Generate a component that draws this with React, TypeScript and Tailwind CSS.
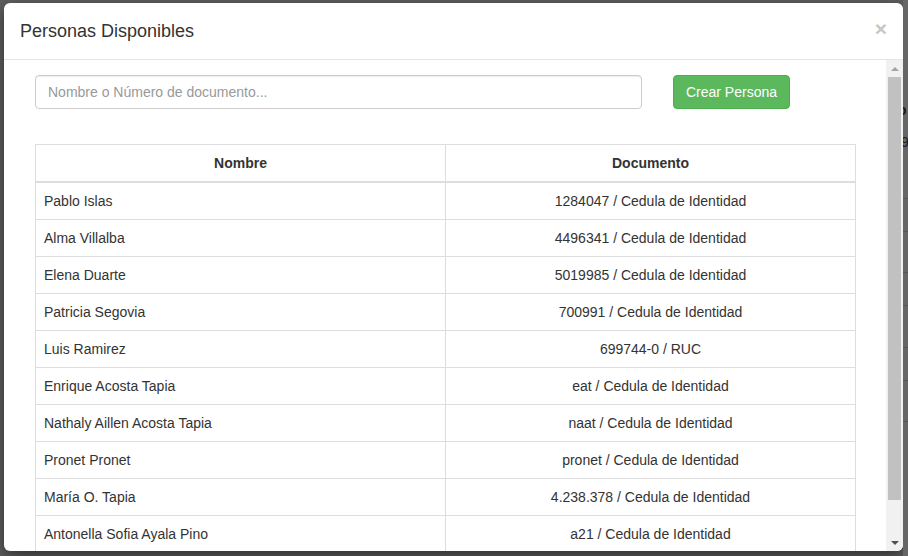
const personas = [
  { nombre: 'Pablo Islas', documento: '1284047 / Cedula de Identidad' },
  { nombre: 'Alma Villalba', documento: '4496341 / Cedula de Identidad' },
  { nombre: 'Elena Duarte', documento: '5019985 / Cedula de Identidad' },
  { nombre: 'Patricia Segovia', documento: '700991 / Cedula de Identidad' },
  { nombre: 'Luis Ramirez', documento: '699744-0 / RUC' },
  { nombre: 'Enrique Acosta Tapia', documento: 'eat / Cedula de Identidad' },
  { nombre: 'Nathaly Aillen Acosta Tapia', documento: 'naat / Cedula de Identidad' },
  { nombre: 'Pronet Pronet', documento: 'pronet / Cedula de Identidad' },
  { nombre: 'María O. Tapia', documento: '4.238.378 / Cedula de Identidad' },
  { nombre: 'Antonella Sofia Ayala Pino', documento: 'a21 / Cedula de Identidad' },
];

const ScrollBar = () => (
  <div className="w-[17px] shrink-0 bg-[#f1f1f1] flex flex-col">
    <div className="h-[17px] flex items-center justify-center">
      <div className="w-0 h-0 border-l-[4px] border-r-[4px] border-b-[4px] border-l-transparent border-r-transparent border-b-[#a3a3a3]" />
    </div>
    <div className="h-[423px] mx-[2px] bg-[#c1c1c1]" />
    <div className="flex-1" />
    <div className="h-[17px] flex items-center justify-center">
      <div className="w-0 h-0 border-l-[4px] border-r-[4px] border-t-[4px] border-l-transparent border-r-transparent border-t-[#505050]" />
    </div>
  </div>
);

const App = () => {
  return (
    <div
      className="w-[908px] h-[556px] overflow-hidden bg-[#5e5e5e] flex text-[#333]"
      style={{ fontFamily: '"Liberation Sans", Arial, Helvetica, sans-serif' }}
    >
      <div className="pl-[4px] pt-[3px] shrink-0">
        <div className="w-[899px] h-[548px] bg-white rounded-[6px] shadow-[0_5px_15px_rgba(0,0,0,0.5)] flex flex-col overflow-hidden">
          {/* Header */}
          <div className="h-[57px] shrink-0 border-b border-[#e5e5e5] flex items-center justify-between pl-[16px] pr-[16px]">
            <h4 className="text-[18px] leading-[26px] font-normal">Personas Disponibles</h4>
            <span className="text-[21px] font-bold leading-none text-[#c6c6c6] -mt-[5px]">×</span>
          </div>

          {/* Body */}
          <div className="flex flex-1 min-h-0">
            <div className="flex-1 overflow-hidden pl-[31px] pt-[15px]">
              <div className="flex items-center gap-[31px]">
                <input
                  className="w-[607px] h-[34px] border border-[#ccc] rounded-[4px] px-[12px] text-[14px] placeholder:text-[#999] outline-none shadow-[inset_0_1px_1px_rgba(0,0,0,0.075)]"
                  placeholder="Nombre o Número de documento..."
                />
                <button className="w-[117px] h-[34px] bg-[#5cb85c] border border-[#4cae4c] rounded-[4px] text-white text-[14px]">
                  Crear Persona
                </button>
              </div>

              <table className="mt-[35px] w-[821px] border-collapse text-[14px] leading-[20px] table-fixed">
                <thead>
                  <tr>
                    <th className="w-1/2 border border-b-2 border-[#ddd] p-[8px] font-bold text-center">Nombre</th>
                    <th className="w-1/2 border border-b-2 border-[#ddd] p-[8px] font-bold text-center">Documento</th>
                  </tr>
                </thead>
                <tbody>
                  {personas.map((p) => (
                    <tr key={p.nombre}>
                      <td className="border border-[#ddd] p-[8px] text-left">{p.nombre}</td>
                      <td className="border border-[#ddd] p-[8px] text-center">{p.documento}</td>
                    </tr>
                  ))}
                </tbody>
              </table>
            </div>
            <ScrollBar />
          </div>
        </div>
      </div>

      {/* page behind the backdrop */}
      <div className="flex-1 flex flex-col bg-[#666] overflow-hidden">
        <div className="h-[100px]" />
        <div className="h-[20px] text-[14px] font-bold text-[#1a1a1a] leading-[20px] -ml-[5px]">o</div>
        <div className="h-[12px]" />
        <div className="h-[20px] text-[14px] text-[#1a1a1a] leading-[20px] -ml-[2px]">9</div>
        <div className="h-[47px] border-b border-[#555]" />
        <div className="h-[33px] border-b border-[#555]" />
        <div className="h-[41px] border-b border-[#555]" />
        <div className="h-[33px] border-b border-[#555]" />
        <div className="h-[42px] border-b border-[#555]" />
        <div className="h-[33px] border-b border-[#555]" />
        <div className="h-[41px] border-b border-[#555]" />
      </div>
    </div>
  );
};

export default App;
